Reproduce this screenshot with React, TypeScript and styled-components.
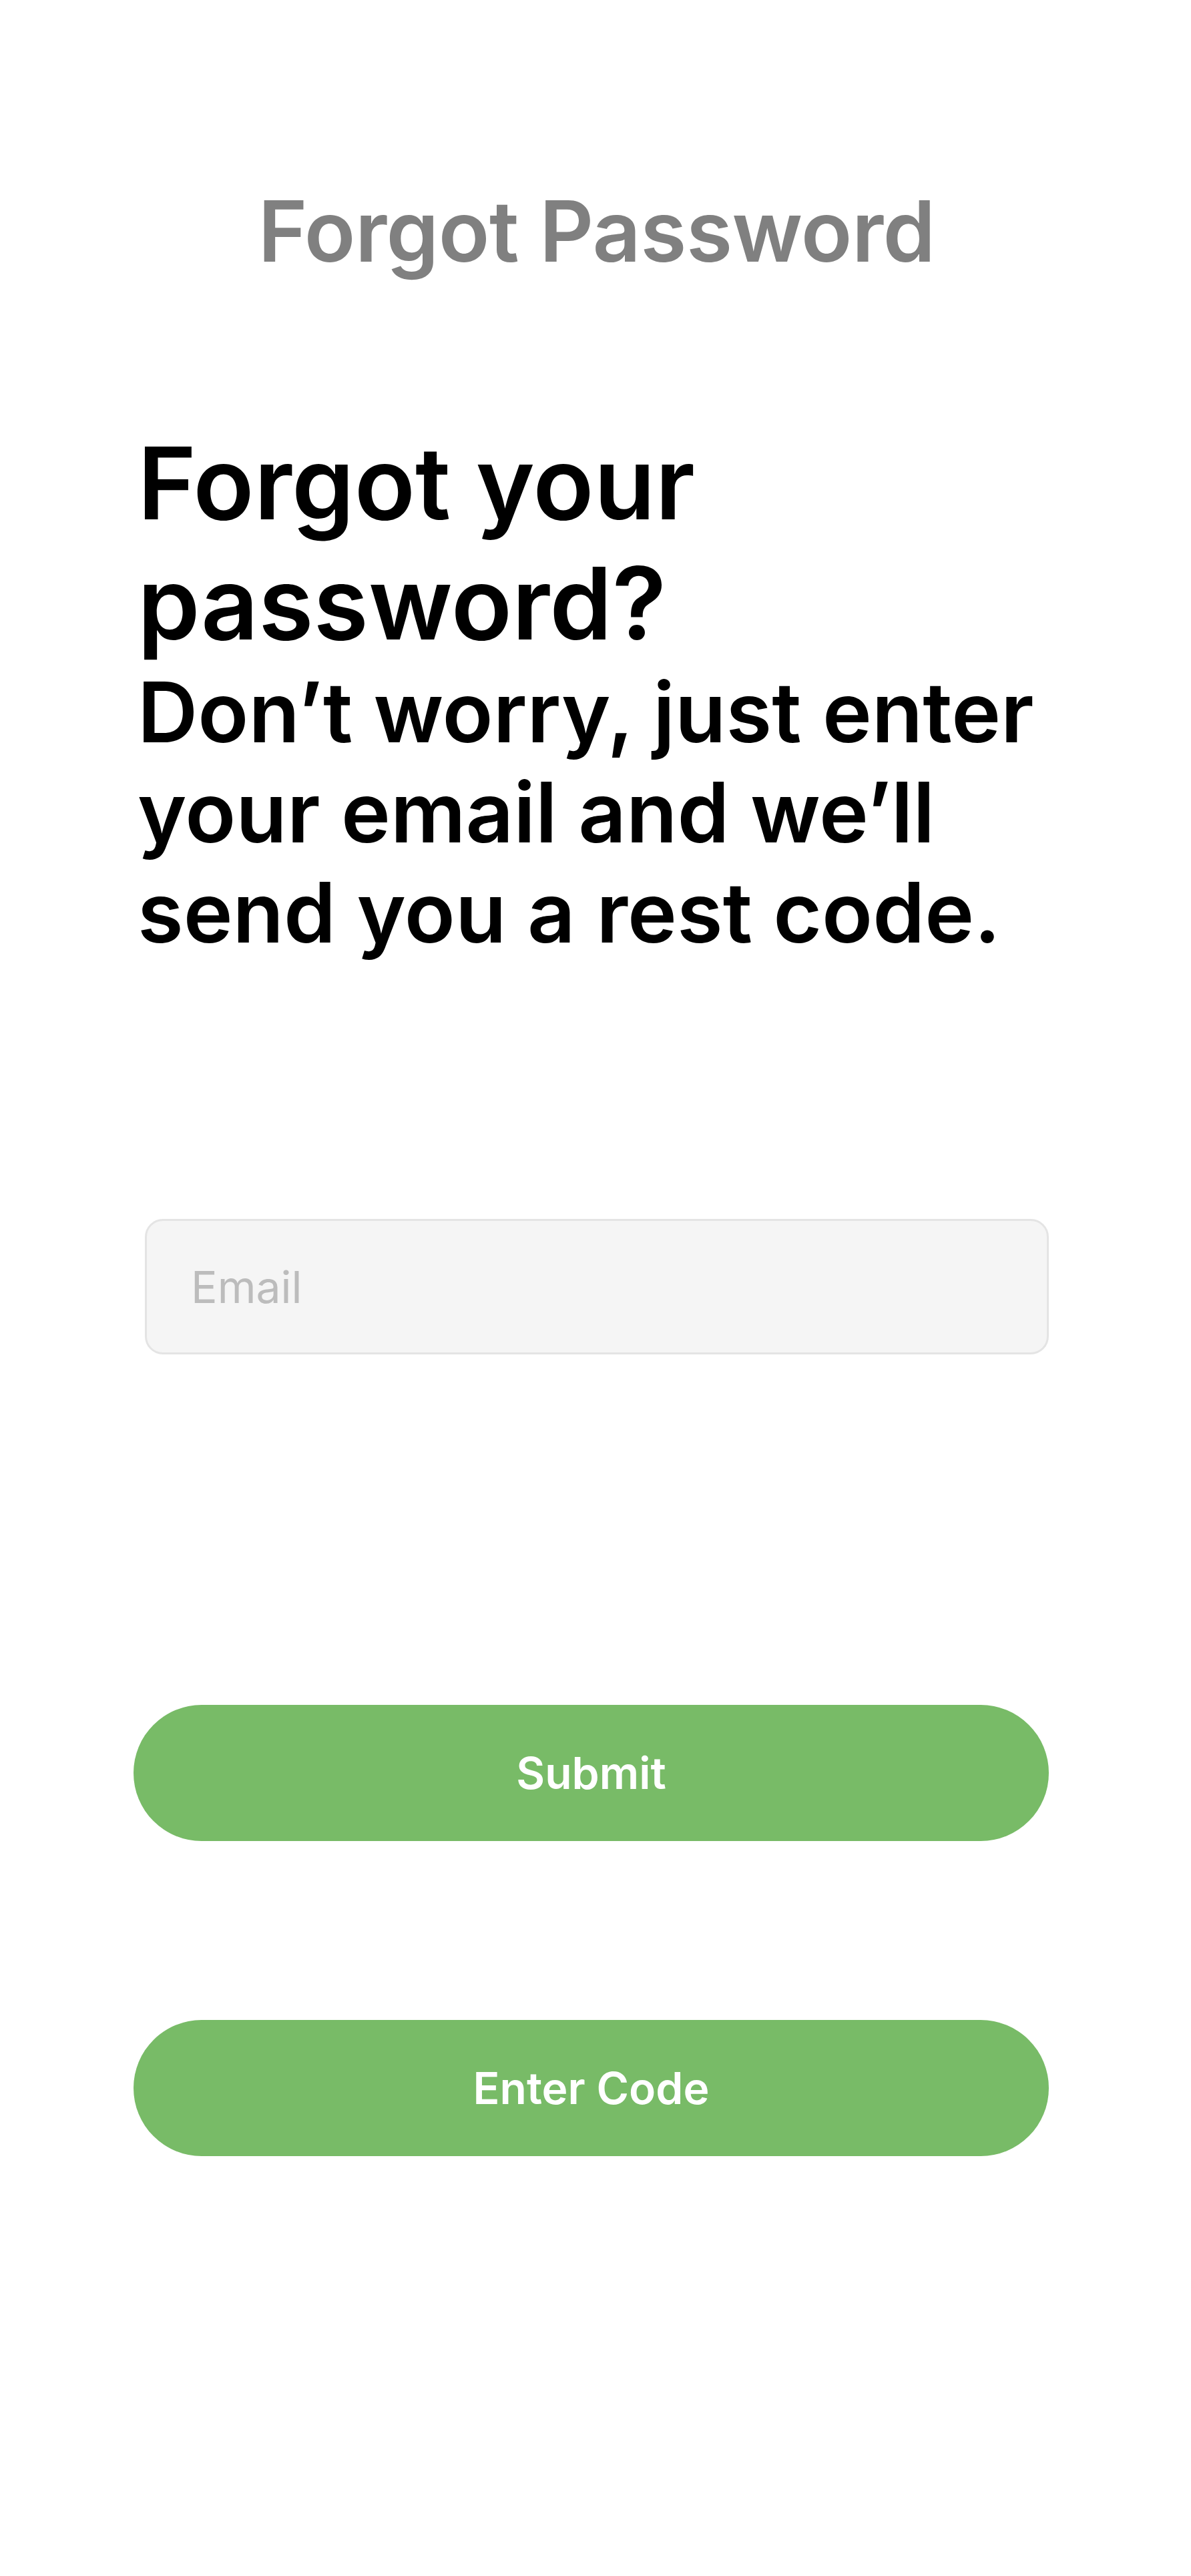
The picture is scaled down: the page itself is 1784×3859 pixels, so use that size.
import React from "react";
import styled, { createGlobalStyle } from "styled-components";

const GlobalStyle = createGlobalStyle`
  html, body {
    margin: 0;
    padding: 0;
    background: #ffffff;
  }
  body {
    font-family: Inter, "Noto Sans", "Liberation Sans", sans-serif;
    -webkit-font-smoothing: antialiased;
  }
  * { box-sizing: border-box; }
`;

const Page = styled.main`
  width: 1784px;
  min-height: 3859px;
  display: flex;
  flex-direction: column;
  padding: 271px 213px 0 200px;
  background: #ffffff;
`;

const ScreenTitle = styled.h1`
  margin: 0;
  font-size: 126px;
  line-height: 150px;
  font-weight: 600;
  letter-spacing: -0.6px;
  color: #808080;
  text-align: center;
  transform: translateX(8px);
`;

const Intro = styled.section`
  margin: 213px 0 0 6px;
  display: flex;
  flex-direction: column;
`;

const Headline = styled.h2`
  margin: 0;
  font-size: 150px;
  line-height: 180px;
  font-weight: 600;
  color: #000000;
`;

const Lead = styled.p`
  margin: -2px 0 0 0;
  font-size: 125px;
  line-height: 150px;
  font-weight: 600;
  color: #000000;
`;

const Form = styled.form`
  display: flex;
  flex-direction: column;
  margin-top: 384px;
`;

const EmailField = styled.input`
  margin-left: 17px;
  width: 1354px;
  height: 203px;
  padding: 0 0 0 66px;
  border: 3px solid #e4e4e4;
  border-radius: 27px;
  background: #f5f5f5;
  font-family: Inter, "Noto Sans", "Liberation Sans", sans-serif;
  font-size: 66px;
  font-weight: 400;
  color: #222;
  outline: none;
  &::placeholder {
    color: #bcbcbc;
  }
`;

const PillButton = styled.button<{ $gap: number }>`
  margin-top: ${(p) => p.$gap}px;
  width: 1371px;
  height: 204px;
  border: none;
  border-radius: 102px;
  background: #78bb67;
  color: #ffffff;
  font-family: Inter, "Noto Sans", "Liberation Sans", sans-serif;
  font-size: 66px;
  font-weight: 600;
  display: flex;
  align-items: center;
  justify-content: center;
  cursor: pointer;
`;

export default function App() {
  return (
    <>
      <GlobalStyle />
      <Page>
        <ScreenTitle>Forgot Password</ScreenTitle>
        <Intro>
          <Headline>Forgot your password?</Headline>
          <Lead>Don’t worry, just enter your email and we’ll send you a rest code.</Lead>
        </Intro>
        <Form onSubmit={(e) => e.preventDefault()}>
          <EmailField type="email" placeholder="Email" />
          <PillButton type="submit" $gap={525}>Submit</PillButton>
          <PillButton type="button" $gap={268}>Enter Code</PillButton>
        </Form>
      </Page>
    </>
  );
}
